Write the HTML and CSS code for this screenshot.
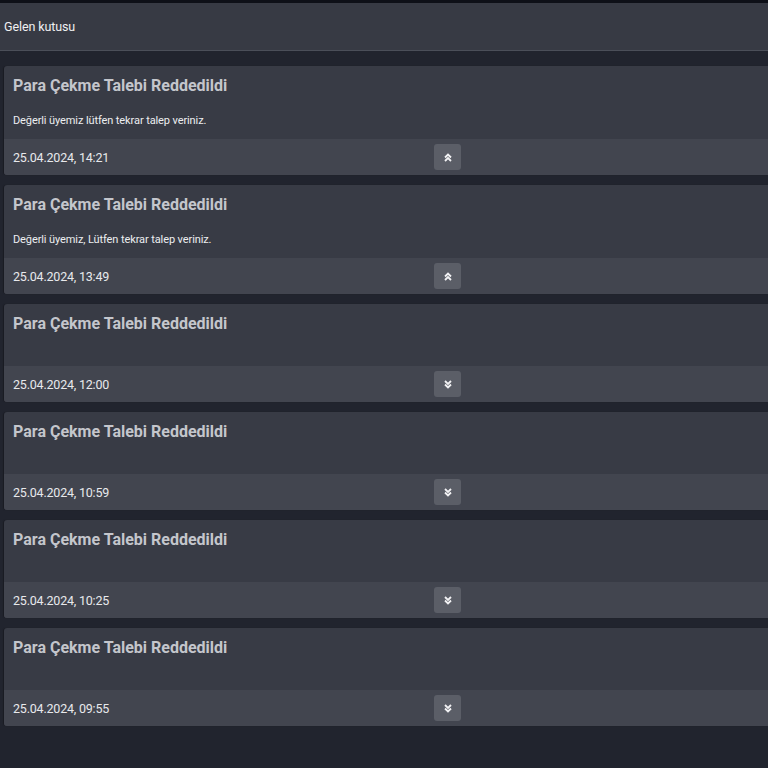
FILE: index.html
```html
<!DOCTYPE html>
<html lang="tr">
<head>
    <meta charset="UTF-8">
    <meta name="viewport" content="width=device-width, initial-scale=1.0">
    <title>Gelen kutusu</title>
    <link rel="stylesheet" href="styles.css">
</head>
<body>
    <div class="topbar"></div>
    <header class="inbox-header">Gelen kutusu</header>

    <main class="messages">
        <div class="message open">
            <h3 class="message-title">Para Çekme Talebi Reddedildi</h3>
            <div class="message-body">Değerli üyemiz lütfen tekrar talep veriniz.</div>
            <div class="message-footer">
                <span class="message-date">25.04.2024, 14:21</span>
                <button class="toggle"><svg viewBox="0 0 10 10"><path d="M2 5 L5 2 L8 5 M2 8.5 L5 5.5 L8 8.5"/></svg></button>
            </div>
        </div>
        <div class="message open">
            <h3 class="message-title">Para Çekme Talebi Reddedildi</h3>
            <div class="message-body">Değerli üyemiz, Lütfen tekrar talep veriniz.</div>
            <div class="message-footer">
                <span class="message-date">25.04.2024, 13:49</span>
                <button class="toggle"><svg viewBox="0 0 10 10"><path d="M2 5 L5 2 L8 5 M2 8.5 L5 5.5 L8 8.5"/></svg></button>
            </div>
        </div>
        <div class="message">
            <h3 class="message-title">Para Çekme Talebi Reddedildi</h3>
            <div class="message-body"></div>
            <div class="message-footer">
                <span class="message-date">25.04.2024, 12:00</span>
                <button class="toggle"><svg viewBox="0 0 10 10"><path d="M2 1.5 L5 4.5 L8 1.5 M2 5 L5 8 L8 5"/></svg></button>
            </div>
        </div>
        <div class="message">
            <h3 class="message-title">Para Çekme Talebi Reddedildi</h3>
            <div class="message-body"></div>
            <div class="message-footer">
                <span class="message-date">25.04.2024, 10:59</span>
                <button class="toggle"><svg viewBox="0 0 10 10"><path d="M2 1.5 L5 4.5 L8 1.5 M2 5 L5 8 L8 5"/></svg></button>
            </div>
        </div>
        <div class="message">
            <h3 class="message-title">Para Çekme Talebi Reddedildi</h3>
            <div class="message-body"></div>
            <div class="message-footer">
                <span class="message-date">25.04.2024, 10:25</span>
                <button class="toggle"><svg viewBox="0 0 10 10"><path d="M2 1.5 L5 4.5 L8 1.5 M2 5 L5 8 L8 5"/></svg></button>
            </div>
        </div>
        <div class="message">
            <h3 class="message-title">Para Çekme Talebi Reddedildi</h3>
            <div class="message-body"></div>
            <div class="message-footer">
                <span class="message-date">25.04.2024, 09:55</span>
                <button class="toggle"><svg viewBox="0 0 10 10"><path d="M2 1.5 L5 4.5 L8 1.5 M2 5 L5 8 L8 5"/></svg></button>
            </div>
        </div>
    </main>
</body>
</html>
```

FILE: styles.css
```css
* {
    margin: 0;
    padding: 0;
    box-sizing: border-box;
}
body {
    font-family: Roboto, 'Liberation Sans', sans-serif;
    background: #21242e;
    color: #e6e7ea;
    min-height: 100vh;
    overflow-x: hidden;
}
.topbar {
    height: 3px;
    background: #0e1018;
}
.inbox-header {
    height: 48px;
    display: flex;
    align-items: center;
    padding: 0 4px;
    background: #373a44;
    border-bottom: 1px solid #4b4f59;
    font-size: 12.5px;
    letter-spacing: -0.1px;
    color: #f0f0f2;
}

/* Message cards */
.messages {
    display: flex;
    flex-direction: column;
    gap: 10px;
    padding: 15px 0 0 4px;
}
.message {
    background: #383b45;
    border-radius: 3px 0 0 3px;
    box-shadow: -1px 0 1px rgba(0, 0, 0, 0.25);
}
.message-title {
    padding: 10px 9px 0;
    font-size: 16px;
    line-height: 20px;
    font-weight: 700;
    color: #c4c6cc;
}
.message-body {
    min-height: 32px;
    padding: 19px 9px 12px;
    font-size: 11px;
    line-height: 12px;
    letter-spacing: -0.1px;
    color: #eceef0;
}
.message-footer {
    height: 36px;
    display: grid;
    grid-template-columns: 421px 27px;
    align-items: center;
    padding-left: 9px;
    background: #42454f;
    border-radius: 0 0 0 3px;
}
.message-date {
    font-size: 12.5px;
    letter-spacing: -0.2px;
    color: #e8e9ec;
}
.toggle {
    width: 27px;
    height: 26px;
    border: none;
    border-radius: 3px;
    background: #5b5e67;
    display: flex;
    align-items: center;
    justify-content: center;
    cursor: pointer;
}
.toggle svg {
    width: 10px;
    height: 11px;
    fill: none;
    stroke: #f2f2f4;
    stroke-width: 1.8;
}
```
